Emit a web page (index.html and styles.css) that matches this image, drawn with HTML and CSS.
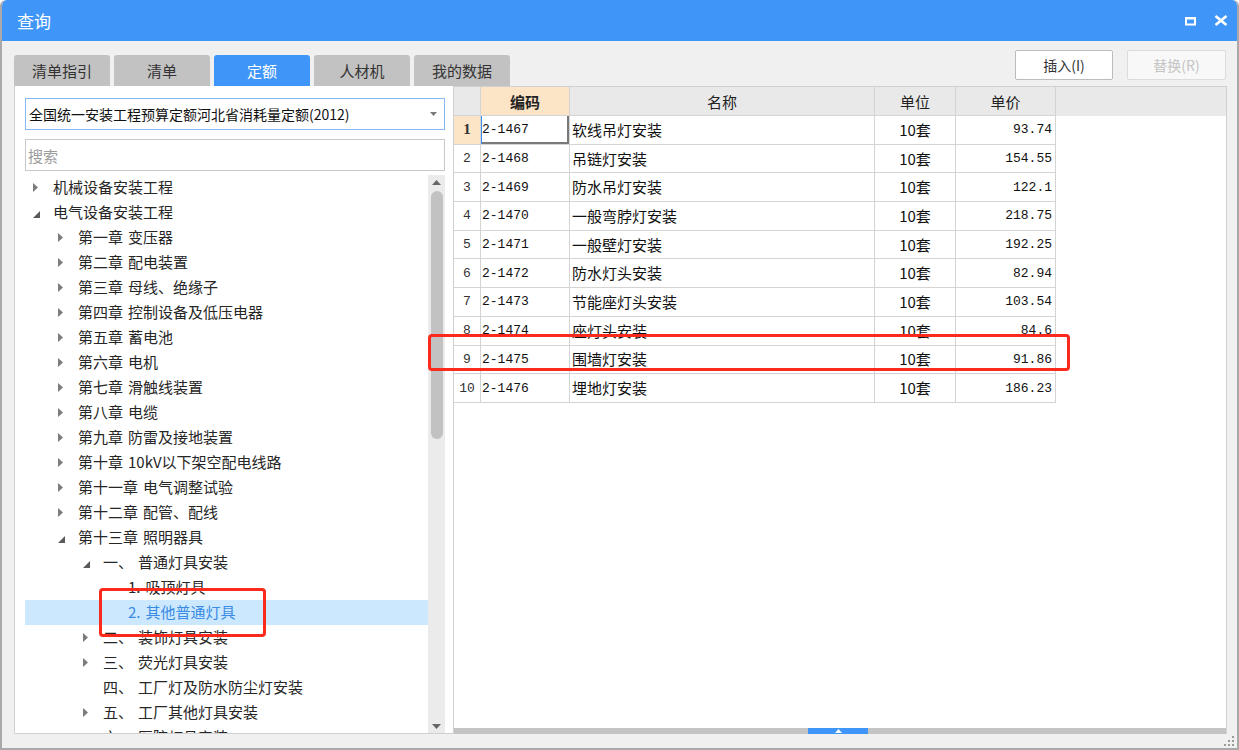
FILE: index.html
```html
<!DOCTYPE html>
<html lang="zh-CN">
<head>
    <meta charset="UTF-8">
    <meta name="viewport" content="width=device-width, initial-scale=1.0">
    <title>查询</title>
    <link rel="stylesheet" href="styles.css">
</head>
<body>
    <div class="window">
        <div class="titlebar">
            <span class="title">查询</span>
            <div class="win-btns">
                <svg width="11" height="10" viewBox="0 0 11 10"><rect x="1" y="2" width="9" height="6.5" fill="none" stroke="#fff" stroke-width="2"/><rect x="0" y="1" width="11" height="2.5" fill="#fff"/></svg>
                <svg width="14" height="11" viewBox="0 0 14 11"><path d="M1.5 1L12.5 10M12.5 1L1.5 10" stroke="#fff" stroke-width="2.6"/></svg>
            </div>
        </div>

        <div class="toolbar">
            <div class="tabs">
                <button class="tab">清单指引</button>
                <button class="tab">清单</button>
                <button class="tab active">定额</button>
                <button class="tab">人材机</button>
                <button class="tab">我的数据</button>
            </div>
            <div class="actions">
                <button class="btn">插入(I)</button>
                <button class="btn disabled">替换(R)</button>
            </div>
        </div>

        <div class="main">
            <div class="left-panel">
                <div class="select">
                    <span>全国统一安装工程预算定额河北省消耗量定额(2012)</span>
                    <svg width="7" height="4" viewBox="0 0 7 4"><path d="M0 0H7L3.5 4Z" fill="#7a7a7a"/></svg>
                </div>
                <div class="search">搜索</div>
                <div class="tree-wrap">
                    <div class="tree" id="tree"></div>
                    <div class="vscroll">
                        <svg class="arrow-up" width="9" height="5" viewBox="0 0 9 5"><path d="M0 5H9L4.5 0Z" fill="#666"/></svg>
                        <div class="thumb"></div>
                        <svg class="arrow-down" width="9" height="5" viewBox="0 0 9 5"><path d="M0 0H9L4.5 5Z" fill="#666"/></svg>
                    </div>
                </div>
            </div>

            <div class="right-panel">
                <div class="grid" id="grid"></div>
                <div class="hscroll">
                    <div class="hthumb">
                        <svg width="7" height="4" viewBox="0 0 7 4"><path d="M0 4H7L3.5 0Z" fill="#fff"/></svg>
                    </div>
                </div>
            </div>
        </div>

        <div class="statusbar">
            <svg width="10" height="10" viewBox="0 0 10 10" fill="#9a9a9a">
                <rect x="8" y="0" width="2" height="2"/>
                <rect x="4" y="4" width="2" height="2"/><rect x="8" y="4" width="2" height="2"/>
                <rect x="0" y="8" width="2" height="2"/><rect x="4" y="8" width="2" height="2"/><rect x="8" y="8" width="2" height="2"/>
            </svg>
        </div>

        <div class="mark mark-tree"></div>
        <div class="mark mark-row"></div>
    </div>

    <script>
        const treeData = [
            [0, 'c', '机械设备安装工程'],
            [0, 'e', '电气设备安装工程'],
            [1, 'c', '第一章 变压器'],
            [1, 'c', '第二章 配电装置'],
            [1, 'c', '第三章 母线、绝缘子'],
            [1, 'c', '第四章 控制设备及低压电器'],
            [1, 'c', '第五章 蓄电池'],
            [1, 'c', '第六章 电机'],
            [1, 'c', '第七章 滑触线装置'],
            [1, 'c', '第八章 电缆'],
            [1, 'c', '第九章 防雷及接地装置'],
            [1, 'c', '第十章 10kV以下架空配电线路'],
            [1, 'c', '第十一章 电气调整试验'],
            [1, 'c', '第十二章 配管、配线'],
            [1, 'e', '第十三章 照明器具'],
            [2, 'e', '一、 普通灯具安装'],
            [3, '', '1. 吸顶灯具'],
            [3, '', '2. 其他普通灯具', true],
            [2, 'c', '二、 装饰灯具安装'],
            [2, 'c', '三、 荧光灯具安装'],
            [2, '', '四、 工厂灯及防水防尘灯安装'],
            [2, 'c', '五、 工厂其他灯具安装'],
            [2, 'c', '六、 医院灯具安装']
        ];

        const rows = [
            ['2-1467', '软线吊灯安装', '10套', '93.74'],
            ['2-1468', '吊链灯安装', '10套', '154.55'],
            ['2-1469', '防水吊灯安装', '10套', '122.1'],
            ['2-1470', '一般弯脖灯安装', '10套', '218.75'],
            ['2-1471', '一般壁灯安装', '10套', '192.25'],
            ['2-1472', '防水灯头安装', '10套', '82.94'],
            ['2-1473', '节能座灯头安装', '10套', '103.54'],
            ['2-1474', '座灯头安装', '10套', '84.6'],
            ['2-1475', '围墙灯安装', '10套', '91.86'],
            ['2-1476', '埋地灯安装', '10套', '186.23']
        ];

        const icons = {
            c: '<svg width="5" height="9" viewBox="0 0 5 9"><path d="M0 0L5 4.5L0 9Z" fill="#7c7c7c"/></svg>',
            e: '<svg class="open" width="7" height="7" viewBox="0 0 7 7"><path d="M7 0V7H0Z" fill="#5a5a5a"/></svg>',
            '': ''
        };

        function splitLabel(text) {
            const i = text.indexOf(' ');
            if (i === -1) return text;
            return `<span class="lead">${text.slice(0, i)}</span>${text.slice(i + 1)}`;
        }

        document.getElementById('tree').innerHTML = treeData.map(([level, state, text, selected]) => `
            <div class="node${selected ? ' selected' : ''}" style="padding-left:${level * 25}px">
                <span class="twisty">${icons[state]}</span>
                <span class="label">${splitLabel(text)}</span>
            </div>
        `).join('');

        document.getElementById('grid').innerHTML = `
            <div class="grid-row head">
                <div class="cell"></div>
                <div class="cell code-head">编码</div>
                <div class="cell">名称</div>
                <div class="cell">单位</div>
                <div class="cell">单价</div>
            </div>
        ` + rows.map((r, i) => `
            <div class="grid-row">
                <div class="cell num${i === 0 ? ' current' : ''}">${i + 1}</div>
                <div class="cell code${i === 0 ? ' focus' : ''}">${r[0]}</div>
                <div class="cell name">${r[1]}</div>
                <div class="cell unit">${r[2]}</div>
                <div class="cell price">${r[3]}</div>
            </div>
        `).join('');
    </script>
</body>
</html>
```

FILE: styles.css
```css
body {
    margin: 0;
    font-family: "Noto Sans CJK SC", "Microsoft YaHei", sans-serif;
    font-size: 15px;
    color: #262626;
    background: #ffffff;
}
.window {
    position: relative;
    width: 1239px;
    height: 750px;
    box-sizing: border-box;
    border: 2px solid #a9a9a9;
    border-top: none;
    border-radius: 6px 6px 0 0;
    background: #f0f0f0;
    display: flex;
    flex-direction: column;
    overflow: hidden;
}
.titlebar {
    height: 41px;
    flex-shrink: 0;
    display: flex;
    align-items: center;
    justify-content: space-between;
    padding: 0 9px 0 15px;
    background: #4096f8;
    color: #fff;
    border-radius: 5px 5px 0 0;
}
.title {
    font-size: 17px;
    line-height: 20px;
}
.win-btns {
    display: flex;
    align-items: center;
    gap: 18px;
}
.toolbar {
    height: 45px;
    flex-shrink: 0;
    display: flex;
    align-items: flex-end;
    justify-content: space-between;
    padding: 0 10px 0 12px;
}
.tabs {
    display: flex;
    gap: 4px;
}
.tab {
    width: 96px;
    height: 31px;
    padding: 0;
    border: none;
    border-radius: 3px 3px 0 0;
    background: #c2c2c2;
    color: #333;
    font-family: inherit;
    font-size: 15px;
}
.tab.active {
    background: #4096f8;
    color: #fff;
}
.actions {
    display: flex;
    gap: 14px;
    margin: 0 1px 6px 0;
}
.btn {
    width: 98px;
    height: 30px;
    padding: 0;
    border: 1px solid #bcbcbc;
    border-radius: 2px;
    background: #fff;
    color: #333;
    font-family: inherit;
    font-size: 14px;
}
.btn.disabled {
    width: 99px;
    border-color: #dcdcdc;
    background: #f8f8f8;
    color: #c4c4c4;
}
.main {
    height: 648px;
    flex-shrink: 0;
    display: flex;
    padding: 0 10px 0 12px;
}
.left-panel {
    width: 439px;
    box-sizing: border-box;
    background: #fff;
    border: 1px solid #d0d0d0;
    border-top: none;
    border-right: none;
    padding: 12px 8px 0 10px;
    display: flex;
    flex-direction: column;
}
.select {
    height: 32px;
    box-sizing: border-box;
    flex-shrink: 0;
    display: flex;
    align-items: center;
    justify-content: space-between;
    padding: 0 7px 0 3px;
    border: 1px solid #86b8f2;
    font-size: 14px;
    color: #111;
}
.search {
    height: 32px;
    box-sizing: border-box;
    flex-shrink: 0;
    margin-top: 9px;
    display: flex;
    align-items: center;
    padding-left: 2px;
    border: 1px solid #c8c8c8;
    color: #9c9c9c;
}
.tree-wrap {
    flex: 1;
    min-height: 0;
    margin-top: 4px;
    display: flex;
}
.tree {
    flex: 1;
    overflow: hidden;
}
.node {
    height: 25px;
    display: flex;
    align-items: center;
    line-height: 25px;
    white-space: nowrap;
}
.node .label {
    margin-bottom: 2px;
}
.node.selected {
    background: #cce8ff;
    color: #3a8be3;
}
.twisty {
    width: 28px;
    flex-shrink: 0;
    display: flex;
    align-items: center;
    padding-left: 8px;
    box-sizing: border-box;
}
.twisty .open {
    margin-top: 3px;
}
.lead {
    margin-right: 5px;
}
.vscroll {
    width: 17px;
    flex-shrink: 0;
    background: #ebebeb;
    display: flex;
    flex-direction: column;
    align-items: center;
}
.arrow-up {
    margin-top: 5px;
}
.thumb {
    width: 12px;
    height: 248px;
    margin-top: 6px;
    border-radius: 6px;
    background: #c2c2c2;
}
.arrow-down {
    margin-top: auto;
    margin-bottom: 4px;
}
.right-panel {
    flex: 1;
    box-sizing: border-box;
    background: #fff;
    border: 1px solid #d0d0d0;
    border-bottom: none;
    display: flex;
    flex-direction: column;
}
.grid {
    flex: 1;
}
.grid-row {
    display: grid;
    grid-template-columns: 27px 89px 305px 81px 100px;
    height: 28.7px;
}
.grid-row.head {
    height: 29px;
    background: #e9e9e9;
}
.cell {
    box-sizing: border-box;
    border-right: 1px solid #d4d4d4;
    border-bottom: 1px solid #d4d4d4;
    display: flex;
    align-items: center;
    justify-content: center;
    white-space: nowrap;
    color: #111;
}
.head .cell {
    color: #222;
}
.head .code-head {
    background: #fce4c6;
    font-weight: bold;
}
.num {
    font-family: "Liberation Mono", monospace;
    font-size: 13px;
    color: #333;
}
.num.current {
    background: #fce4c6;
    font-weight: bold;
    font-family: "Liberation Serif", serif;
    font-size: 15px;
}
.code {
    justify-content: flex-start;
    padding-left: 1px;
    font-family: "Liberation Mono", monospace;
    font-size: 13px;
}
.code.focus {
    box-shadow: inset 1px 0 0 #3d8ee8, inset -2px -2px 0 #7a7a7a;
}
.name {
    justify-content: flex-start;
    padding-left: 2px;
}
.name, .unit {
    padding-bottom: 1px;
}
.price {
    justify-content: flex-end;
    padding-right: 3px;
    font-family: "Liberation Mono", monospace;
    font-size: 13px;
}
.hscroll {
    height: 6px;
    flex-shrink: 0;
    background: #c4c4c4;
    display: flex;
}
.hthumb {
    width: 60px;
    margin-left: 354px;
    background: #4096f8;
    display: flex;
    align-items: center;
    justify-content: center;
}
.statusbar {
    flex: 1;
    display: flex;
    justify-content: flex-end;
    align-items: flex-end;
    padding: 0 3px 2px 0;
}
.mark {
    position: absolute;
    box-sizing: border-box;
    border: 3px solid #fb2a1c;
    border-radius: 4px;
}
.mark-tree {
    left: 97px;
    top: 588px;
    width: 167px;
    height: 49px;
}
.mark-row {
    left: 426px;
    top: 334px;
    width: 642px;
    height: 37px;
}
```
